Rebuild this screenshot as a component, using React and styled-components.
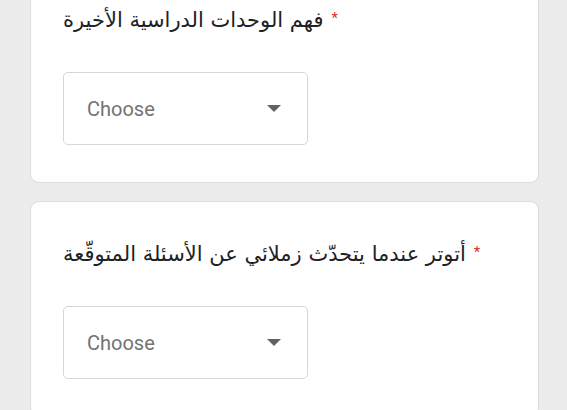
import React from 'react';
import styled, { createGlobalStyle } from 'styled-components';

const GlobalStyle = createGlobalStyle`
  html, body {
    margin: 0;
    padding: 0;
    background: #ececec;
  }
  body {
    font-family: Roboto, "Noto Sans", "DejaVu Sans", sans-serif;
  }
`;

const Page = styled.div`
  display: flex;
  flex-direction: column;
  gap: 18px;
  padding: 0 28px 0 30px;
  margin-top: ${(p) => p.$offset}px;
`;

const Card = styled.div`
  background: #fff;
  border: 1px solid #dcdcdc;
  border-radius: 9px;
  padding: 33px 32px 37px;
  display: flex;
  flex-direction: column;
  align-items: flex-start;
  gap: 35px;
`;

const Title = styled.div`
  font-family: "DejaVu Sans", Roboto, sans-serif;
  font-size: 21px;
  line-height: 34px;
  color: #202124;
  direction: ltr;
  white-space: pre-line;
`;

const Star = styled.span`
  color: #d93025;
  font-family: Roboto, sans-serif;
  font-size: 15px;
  vertical-align: 4px;
  margin-left: 8px;
`;

const Select = styled.div`
  box-sizing: border-box;
  width: 245px;
  height: 73px;
  border: 1px solid #d6d6d6;
  border-radius: 5px;
  display: flex;
  align-items: center;
  justify-content: space-between;
  padding: 0 26px 0 23px;
`;

const Placeholder = styled.span`
  font-family: Roboto, sans-serif;
  font-size: 20px;
  color: #737373;
`;

const Arrow = () => (
  <svg width="14" height="7" viewBox="0 0 14 7">
    <path d="M0 0h14L7 7z" fill="#5f6368" />
  </svg>
);

const questions = [
  'أشعر بالتوتر عندما يطلب مني المعلم أن أشرح\nفهم الوحدات الدراسية الأخيرة',
  'أتوتر عندما يتحدّث زملائي عن الأسئلة المتوقّعة',
];

const Question = ({ text }) => (
  <Card>
    <Title>
      {text}
      <Star>*</Star>
    </Title>
    <Select>
      <Placeholder>Choose</Placeholder>
      <Arrow />
    </Select>
  </Card>
);

export default function App() {
  return (
    <>
      <GlobalStyle />
      <Page $offset={-67}>
        {questions.map((q) => (
          <Question key={q} text={q} />
        ))}
      </Page>
    </>
  );
}
